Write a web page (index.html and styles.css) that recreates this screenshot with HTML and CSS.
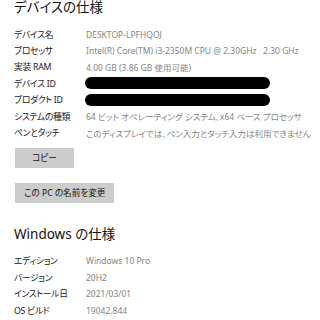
FILE: index.html
```html
<!DOCTYPE html>
<html lang="ja">
  <head>
    <meta charset="UTF-8" />
    <title>バージョン情報</title>
    <link rel="stylesheet" href="styles.css">
  </head>
  <body>
    <!-- Device specs -->
    <section class="section">
      <h1 class="title title-top">デバイスの仕様</h1>
      <dl class="specs">
        <dt>デバイス名</dt>
        <dd>DESKTOP-LPFHQOJ</dd>
        <dt>プロセッサ</dt>
        <dd>Intel(R) Core(TM) i3-2350M CPU @ 2.30GHz&nbsp;&nbsp;&nbsp;2.30 GHz</dd>
        <dt>実装 RAM</dt>
        <dd>4.00 GB (3.86 GB 使用可能)</dd>
        <dt>デバイス ID</dt>
        <dd><span class="masked"></span></dd>
        <dt>プロダクト ID</dt>
        <dd><span class="masked"></span></dd>
        <dt>システムの種類</dt>
        <dd>64 ビット オペレーティング システム、x64 ベース プロセッサ</dd>
        <dt>ペンとタッチ</dt>
        <dd>このディスプレイでは、ペン入力とタッチ入力は利用できません</dd>
      </dl>

      <div class="actions">
        <button class="btn btn-copy">コピー</button>
        <button class="btn">この PC の名前を変更</button>
      </div>
    </section>

    <!-- Windows specs -->
    <section class="section">
      <h2 class="title">Windows の仕様</h2>
      <dl class="specs">
        <dt>エディション</dt>
        <dd>Windows 10 Pro</dd>
        <dt>バージョン</dt>
        <dd>20H2</dd>
        <dt>インストール日</dt>
        <dd>2021/03/01</dd>
        <dt>OS ビルド</dt>
        <dd>19042.844</dd>
      </dl>
    </section>
  </body>
</html>
```

FILE: styles.css
```css
/* General Styles */
body {
  margin: 0;
  padding: 0 0 0 14px;
  background: #fff;
  color: #1f1f1f;
  font-family: "Noto Sans", "Noto Sans CJK JP", sans-serif;
  font-feature-settings: "palt";
  overflow: hidden;
}

/* Section titles */
.title {
  margin: 0;
  font-size: 13.5px;
  font-weight: 400;
  line-height: 20px;
  color: #111;
}

.title-top {
  margin-top: -3px;
}

/* Spec rows */
.specs {
  display: grid;
  grid-template-columns: 72px 1fr;
  grid-auto-rows: 16.4px;
  align-items: center;
  margin: 9px 0 0;
  font-size: 8.8px;
  white-space: nowrap;
}

.specs dt {
  color: #222;
  letter-spacing: -0.3px;
}

.specs dd {
  margin: 0;
  color: #858585;
  font-size: 8.5px;
}

.masked {
  display: block;
  width: 185px;
  height: 12px;
  margin-left: -1px;
  border-radius: 6px;
  background: #000;
}

/* Buttons */
.actions {
  display: flex;
  flex-direction: column;
  align-items: flex-start;
  gap: 15px;
  margin-top: 7px;
}

.btn {
  height: 20px;
  padding: 0 9px;
  border: none;
  background: #cccccc;
  color: #111;
  font-family: inherit;
  font-size: 8.6px;
  font-feature-settings: "palt";
  margin-left: 1px;
}

.btn-copy {
  width: 59px;
}

.section + .section .title {
  margin-top: 21px;
}
```
